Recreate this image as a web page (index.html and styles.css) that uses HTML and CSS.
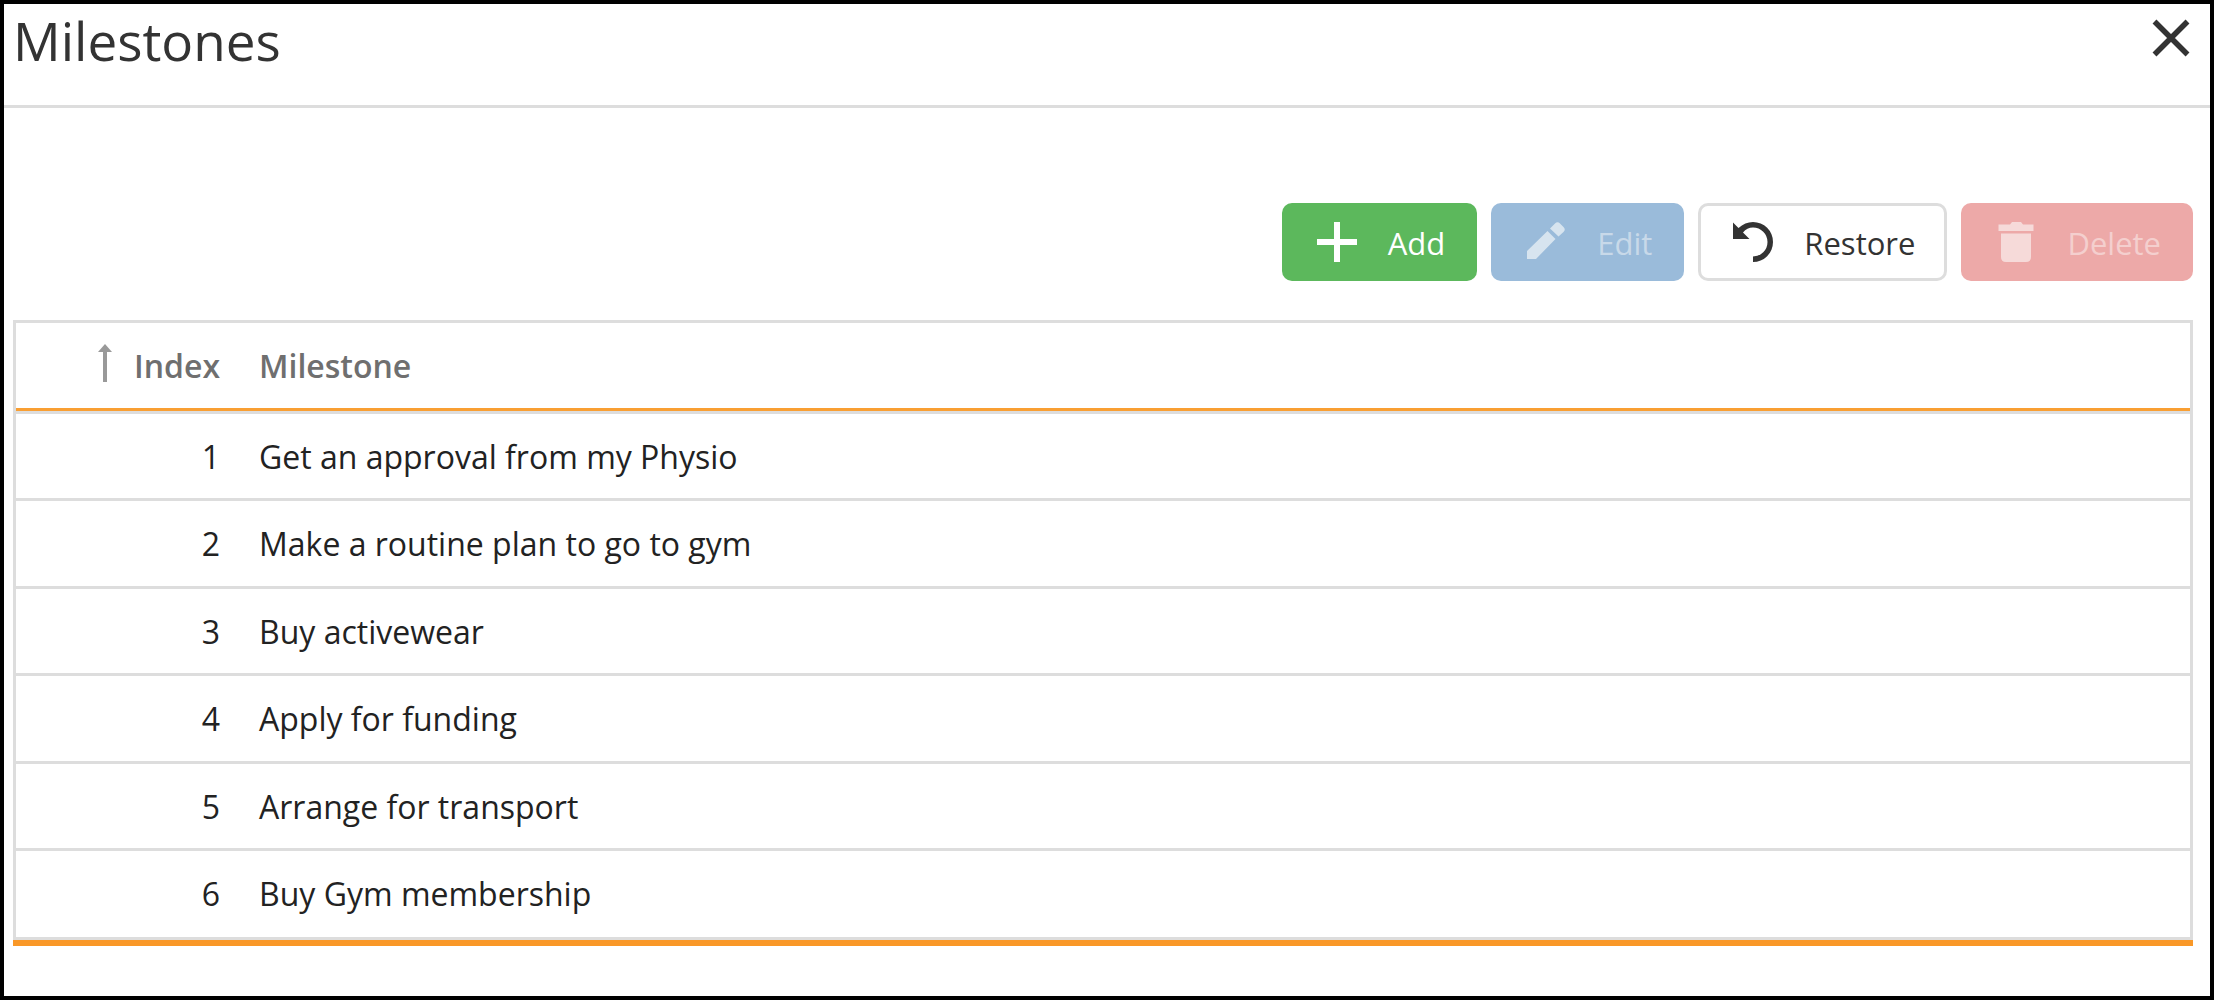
FILE: index.html
```html
<!DOCTYPE html>
<html lang="en">
<head>
    <meta charset="UTF-8">
    <meta name="viewport" content="width=device-width, initial-scale=1.0">
    <link rel="stylesheet" href="styles.css">
    <title>Milestones</title>
</head>
<body>
    <div class="dialog">
        <header class="dialog-header">
            <h1>Milestones</h1>
            <button type="button" class="close-button" aria-label="Close">
                <svg viewBox="0 0 38 38" width="38" height="38"><path d="M2.5 2.5L35.5 35.5M35.5 2.5L2.5 35.5" fill="none" stroke="currentColor" stroke-width="5.500"/></svg>
            </button>
        </header>

        <main class="dialog-content">
            <div class="toolbar">
                <button type="button" class="btn btn-add">
                    <svg viewBox="0 0 40 40" width="40" height="40"><path d="M17 0h6v17h17v6H23v17h-6V23H0v-6h17z"/></svg>
                    <span>Add</span>
                </button>
                <button type="button" class="btn btn-edit" disabled>
                    <svg viewBox="0 0 40 40" width="40" height="40"><path d="M1 29L21.500 9l8 8L10 37H1zM24 6.500L29 1.500Q31.500-1 34 1.500L37.500 5Q40 7.500 37.500 10L32.500 14.500z"/></svg>
                    <span>Edit</span>
                </button>
                <button type="button" class="btn btn-restore">
                    <svg viewBox="0 0 40 40" width="40" height="40"><path d="M0 .5L5.500 6Q12 0 20 0a20 20 0 0 1 0 40v-5.500a14.500 14.500 0 0 0 0-29Q14 5.500 10 10.500L16.500 17H0z"/></svg>
                    <span>Restore</span>
                </button>
                <button type="button" class="btn btn-delete" disabled>
                    <svg viewBox="0 0 40 40" width="40" height="40"><path d="M14 2.500L16 0h9l2 2.500h10.500V9h-35V2.500zM5 11.500h30V35q0 5-5 5H10q-5 0-5-5z"/></svg>
                    <span>Delete</span>
                </button>
            </div>

            <table class="grid">
                <thead>
                    <tr>
                        <th class="index" aria-sort="ascending">
                            <svg class="sort-icon" viewBox="0 0 14 38" width="14" height="38"><path d="M7 0L14 8H9v30H5V8H0z"/></svg>
                            Index
                        </th>
                        <th>Milestone</th>
                    </tr>
                </thead>
                <tbody>
                    <tr><td class="index">1</td><td>Get an approval from my Physio</td></tr>
                    <tr><td class="index">2</td><td>Make a routine plan to go to gym</td></tr>
                    <tr><td class="index">3</td><td>Buy activewear</td></tr>
                    <tr><td class="index">4</td><td>Apply for funding</td></tr>
                    <tr><td class="index">5</td><td>Arrange for transport</td></tr>
                    <tr><td class="index">6</td><td>Buy Gym membership</td></tr>
                </tbody>
            </table>
        </main>
    </div>
</body>
</html>
```
FILE: styles.css
```css
* {
    box-sizing: border-box;
}

body {
    margin: 0;
    font-family: "Segoe UI", "Open Sans", "Noto Sans", sans-serif;
    font-size: 32px;
    color: #222;
    background: #fff;
}

.dialog {
    min-height: 100vh;
    border: 4px solid #000;
}

.dialog-header {
    display: flex;
    justify-content: space-between;
    align-items: flex-start;
    height: 104px;
    padding: 0 20px 0 9px;
    border-bottom: 3px solid #ddd;
}

h1 {
    margin: 0;
    font-size: 53px;
    font-weight: 400;
    line-height: 74px;
    color: #333;
}

.close-button {
    display: flex;
    margin-top: 15px;
    padding: 0;
    border: none;
    background: none;
    color: #333;
    cursor: pointer;
}

.dialog-content {
    padding: 95px 17px 40px 9px;
}

.toolbar {
    display: flex;
    justify-content: flex-end;
    gap: 14px;
    margin-bottom: 39px;
}

.btn {
    display: flex;
    align-items: center;
    gap: 31px;
    height: 78px;
    padding: 0 32px 0 35px;
    border: none;
    border-radius: 10px;
    font-family: inherit;
    font-size: 31px;
    color: #fff;
    cursor: pointer;
}

.btn span {
    padding-top: 2px;
}

.btn svg,
.sort-icon {
    fill: currentColor;
}

.btn:disabled {
    cursor: default;
}

.btn-add {
    background: #5cb85c;
}

.btn-edit {
    background: #9abbda;
    color: #c8d9e9;
}

.btn-edit svg {
    color: #d7e4ef;
}

.btn-restore {
    background: #fff;
    color: #333;
    box-shadow: inset 0 0 0 3px #ddd;
}

.btn-delete {
    background: #eda9a8;
    color: #f4cfce;
}

.btn-delete svg {
    color: #f6dad9;
}

.grid {
    width: 100%;
    border: 3px solid #ddd;
    border-bottom: none;
    border-collapse: separate;
    border-spacing: 0;
    table-layout: fixed;
    box-shadow: 0 6px #f99828;
}

th,
td {
    padding: 0 19px;
    text-align: left;
    line-height: 44px;
    vertical-align: top;
    border-bottom: 3px solid #ddd;
}

th {
    height: 91px;
    padding-top: 21px;
    font-weight: 600;
    color: #6f6f6f;
    box-shadow: inset 0 -3px #f99f33;
}

td {
    height: 88px;
    padding-top: 21px;
}

tbody tr:nth-child(odd) td {
    height: 87px;
}

tbody tr:last-child td {
    height: 89px;
}

.grid .index {
    width: 224px;
    padding-right: 20px;
    text-align: right;
}

.sort-icon {
    margin-right: 14px;
    vertical-align: top;
    color: #999;
}
```
